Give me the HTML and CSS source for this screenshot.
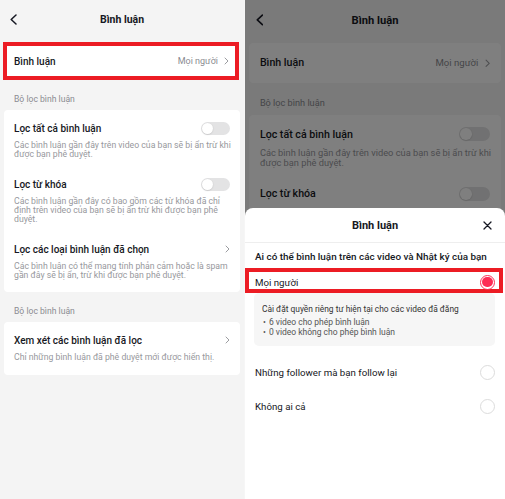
FILE: index.html
```html
<!DOCTYPE html>
<html lang="vi">
<head>
<meta charset="utf-8">
<title>Bình luận</title>
<link rel="stylesheet" href="styles.css">
</head>
<body>
<div class="screen screen--left">
  <div class="page">
    <header class="topbar">
      <span class="topbar-back"><svg width="7" height="11" viewBox="0 0 7 11"><path d="M6 1 L1.2 5.5 L6 10" fill="none" stroke="#161823" stroke-width="1.5" stroke-linecap="round" stroke-linejoin="round"/></svg></span>
      <h1 class="topbar-title">Bình luận</h1>
      <span></span>
    </header>
    <div class="card link-row link-row--highlight">
      <span class="row-title">Bình luận</span>
      <span class="row-value">Mọi người</span>
      <svg class="chev" width="5" height="8" viewBox="0 0 5 8"><path d="M1 1 L4 4 L1 7" fill="none" stroke="#9b9ca0" stroke-width="1" stroke-linecap="round" stroke-linejoin="round"/></svg>
    </div>
    <div class="section-label">Bộ lọc bình luận</div>
    <div class="card card--list">
      <div class="setting">
        <div class="setting-head"><span class="setting-title">Lọc tất cả bình luận</span><span class="toggle"><span class="knob"></span></span></div>
        <p class="setting-desc">Các bình luận gần đây trên video của bạn sẽ bị ẩn trừ khi<br>được bạn phê duyệt.</p>
      </div>
      <div class="setting">
        <div class="setting-head"><span class="setting-title">Lọc từ khóa</span><span class="toggle"><span class="knob"></span></span></div>
        <p class="setting-desc">Các bình luận gần đây có bao gồm các từ khóa đã chỉ<br>định trên video của bạn sẽ bị ẩn trừ khi được bạn phê<br>duyệt.</p>
      </div>
      <div class="setting">
        <div class="setting-head"><span class="setting-title">Lọc các loại bình luận đã chọn</span><svg class="chev" width="5" height="8" viewBox="0 0 5 8"><path d="M1 1 L4 4 L1 7" fill="none" stroke="#9b9ca0" stroke-width="1" stroke-linecap="round" stroke-linejoin="round"/></svg></div>
        <p class="setting-desc">Các bình luận có thể mang tính phản cảm hoặc là spam<br>gần đây sẽ bị ẩn, trừ khi được bạn phê duyệt.</p>
      </div>
    </div>
    <div class="section-label">Bộ lọc bình luận</div>
    <div class="card card--list">
      <div class="setting setting--single">
        <div class="setting-head"><span class="setting-title">Xem xét các bình luận đã lọc</span><svg class="chev" width="5" height="8" viewBox="0 0 5 8"><path d="M1 1 L4 4 L1 7" fill="none" stroke="#9b9ca0" stroke-width="1" stroke-linecap="round" stroke-linejoin="round"/></svg></div>
        <p class="setting-desc">Chỉ những bình luận đã phê duyệt mới được hiển thị.</p>
      </div>
    </div>
  </div>
</div>

<div class="screen screen--right">
  <div class="page page--zoomed">
    <header class="topbar">
      <span class="topbar-back"><svg width="7" height="11" viewBox="0 0 7 11"><path d="M6 1 L1.2 5.5 L6 10" fill="none" stroke="#161823" stroke-width="1.5" stroke-linecap="round" stroke-linejoin="round"/></svg></span>
      <h1 class="topbar-title">Bình luận</h1>
      <span></span>
    </header>
    <div class="card link-row">
      <span class="row-title">Bình luận</span>
      <span class="row-value">Mọi người</span>
      <svg class="chev" width="5" height="8" viewBox="0 0 5 8"><path d="M1 1 L4 4 L1 7" fill="none" stroke="#9b9ca0" stroke-width="1" stroke-linecap="round" stroke-linejoin="round"/></svg>
    </div>
    <div class="section-label">Bộ lọc bình luận</div>
    <div class="card card--list">
      <div class="setting">
        <div class="setting-head"><span class="setting-title">Lọc tất cả bình luận</span><span class="toggle"><span class="knob"></span></span></div>
        <p class="setting-desc">Các bình luận gần đây trên video của bạn sẽ bị ẩn trừ khi<br>được bạn phê duyệt.</p>
      </div>
      <div class="setting setting--covered">
        <div class="setting-head"><span class="setting-title">Lọc từ khóa</span><span class="toggle"><span class="knob"></span></span></div>
      </div>
    </div>
  </div>
  <div class="overlay"></div>
  <div class="sheet">
    <div class="sheet-head">
      <span></span>
      <h2 class="sheet-title">Bình luận</h2>
      <span class="sheet-close"><svg width="9" height="9" viewBox="0 0 9 9"><path d="M1 1 L8 8 M8 1 L1 8" fill="none" stroke="#161823" stroke-width="1.3" stroke-linecap="round"/></svg></span>
    </div>
    <p class="sheet-question">Ai có thể bình luận trên các video và Nhật ký của bạn</p>
    <div class="option option--highlight">
      <span>Mọi người</span>
      <span class="radio radio--on"><span class="radio-dot"></span></span>
    </div>
    <div class="notice">
      <p class="notice-title">Cài đặt quyền riêng tư hiện tại cho các video đã đăng</p>
      <ul class="notice-list">
        <li>6 video cho phép bình luận</li>
        <li>0 video không cho phép bình luận</li>
      </ul>
    </div>
    <div class="option option--first">
      <span>Những follower mà bạn follow lại</span>
      <span class="radio"></span>
    </div>
    <div class="option">
      <span>Không ai cả</span>
      <span class="radio"></span>
    </div>
  </div>
</div>
</body>
</html>
```

FILE: styles.css
```css
* { box-sizing: border-box; margin: 0; padding: 0; }

body {
  margin: 0;
  width: 505px;
  height: 499px;
  overflow: hidden;
  display: flex;
  gap: 1px;
  background: #f6f6f6;
  font-family: Roboto, "Noto Sans", "Liberation Sans", sans-serif;
  color: #161823;
}

.screen {
  height: 499px;
  position: relative;
  overflow: hidden;
  background: #f4f4f4;
}
.screen--left { width: 244px; }
.screen--right { width: 260px; }

.page { width: 244px; }
.page--zoomed { zoom: 1.0656; }

.topbar {
  height: 38px;
  display: grid;
  grid-template-columns: 1fr auto 1fr;
  align-items: center;
}
.topbar-back { padding-left: 10px; display: flex; }
.topbar-title { font-size: 10.5px; font-weight: 700; }

.card {
  background: #fff;
  margin: 0 4px;
  border-radius: 4px;
}
.card--list { padding-bottom: 5px; }

.link-row {
  height: 38px;
  margin-top: 2px;
  display: flex;
  align-items: center;
  padding: 0 10px;
}
.link-row--highlight {
  margin: 4px 5px 0 3px;
  border: 4px solid #ec1c24;
  border-radius: 0;
  padding: 0 6px 0 7px;
}
.row-title { flex: 1; font-size: 10px; font-weight: 500; }
.row-value { font-size: 9px; color: #8a8b91; margin-right: 6px; }
.chev { display: block; }

.section-label {
  height: 30px;
  padding: 0 14px 5px;
  display: flex;
  align-items: flex-end;
  font-size: 8.6px;
  line-height: 12px;
  color: #8a8b91;
}

.setting { padding: 11px 10px 7px; }
.setting--single { padding: 11px 10px 8px; }
.setting--covered { padding-bottom: 40px; }
.setting-head {
  height: 14px;
  display: flex;
  align-items: center;
  justify-content: space-between;
}
.setting-title { font-size: 10px; font-weight: 500; }
.setting-desc {
  margin-top: 6px;
  font-size: 8.7px;
  line-height: 9px;
  color: #97989d;
  white-space: nowrap;
}

.toggle {
  width: 29px;
  height: 13px;
  border-radius: 7px;
  background: #e3e3e4;
  padding: 1px;
  display: flex;
}
.knob {
  width: 11px;
  height: 11px;
  border-radius: 50%;
  background: #fff;
  box-shadow: 0 0.5px 1.5px rgba(0,0,0,0.18);
}

.overlay {
  position: absolute;
  inset: 0;
  background: rgba(0,0,0,0.5);
}

.sheet {
  position: absolute;
  left: 0;
  right: 0;
  top: 208px;
  bottom: 0;
  background: #fff;
  border-radius: 8px 8px 0 0;
}
.sheet-head {
  height: 35px;
  border-bottom: 1px solid #eeeeee;
  display: grid;
  grid-template-columns: 1fr auto 1fr;
  align-items: center;
}
.sheet-title { font-size: 11px; font-weight: 700; }
.sheet-close { justify-self: end; padding-right: 13px; display: flex; }

.sheet-question {
  padding: 7px 10px 0;
  font-size: 9.9px;
  font-weight: 500;
  line-height: 14px;
}

.option {
  height: 34px;
  padding: 0 10px;
  display: flex;
  align-items: center;
  justify-content: space-between;
  font-size: 9.7px;
  color: #161823;
}
.option--highlight {
  height: 25px;
  margin: 4px 2px 0 0;
  border: 4px solid #ec1c24;
  padding: 3px 4px 0 6px;
}
.option--first { margin-top: 9px; }

.radio {
  width: 15px;
  height: 15px;
  border-radius: 50%;
  border: 1px solid #dcdcdc;
  display: flex;
}
.radio--on {
  border: 1.3px solid #fe2c55;
  padding: 1.4px;
}
.radio-dot {
  flex: 1;
  border-radius: 50%;
  background: #fe2c55;
}

.notice {
  margin: 0 10px 0 9px;
  background: #f6f6f6;
  border-radius: 5px;
  padding: 10px 8px 9px;
}
.notice-title { font-size: 8.4px; line-height: 12px; color: #333; }
.notice-list {
  list-style: none;
  margin-top: 2px;
  font-size: 8.5px;
  line-height: 10px;
  color: #555;
}
.notice-list li::before { content: "•"; margin: 0 3px 0 1px; }
```
